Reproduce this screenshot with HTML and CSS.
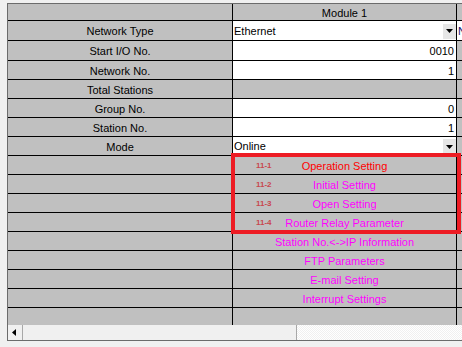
FILE: index.html
```html
<!DOCTYPE html>
<html>
<head>
<meta charset="utf-8">
<link rel="stylesheet" href="styles.css">
</head>
<body>
<div class="sheet">
  <div class="row r-head">
    <div class="cl"></div>
    <div class="cr gray">Module 1</div>
    <div class="cx"></div>
  </div>
  <div class="row r20">
    <div class="cl">Network Type</div>
    <div class="cr combo"><span>Ethernet</span><span class="btn"><svg width="7" height="4" viewBox="0 0 7 4"><path d="M0 0h7L3.5 4z" fill="#000"/></svg></span></div>
    <div class="cx white"><span class="peek">N</span></div>
  </div>
  <div class="row r20">
    <div class="cl">Start I/O No.</div>
    <div class="cr num">0010</div>
    <div class="cx"></div>
  </div>
  <div class="row">
    <div class="cl">Network No.</div>
    <div class="cr num">1</div>
    <div class="cx"></div>
  </div>
  <div class="row">
    <div class="cl">Total Stations</div>
    <div class="cr gray"></div>
    <div class="cx"></div>
  </div>
  <div class="row">
    <div class="cl">Group No.</div>
    <div class="cr num">0</div>
    <div class="cx"></div>
  </div>
  <div class="row">
    <div class="cl">Station No.</div>
    <div class="cr num">1</div>
    <div class="cx"></div>
  </div>
  <div class="row">
    <div class="cl">Mode</div>
    <div class="cr combo"><span>Online</span><span class="btn"><svg width="7" height="4" viewBox="0 0 7 4"><path d="M0 0h7L3.5 4z" fill="#000"/></svg></span></div>
    <div class="cx"></div>
  </div>
  <div class="row">
    <div class="cl"></div>
    <div class="cr gray link red"><span class="tag">11-1</span>Operation Setting</div>
    <div class="cx"></div>
  </div>
  <div class="row">
    <div class="cl"></div>
    <div class="cr gray link"><span class="tag">11-2</span>Initial Setting</div>
    <div class="cx"></div>
  </div>
  <div class="row">
    <div class="cl"></div>
    <div class="cr gray link"><span class="tag">11-3</span>Open Setting</div>
    <div class="cx"></div>
  </div>
  <div class="row">
    <div class="cl"></div>
    <div class="cr gray link"><span class="tag">11-4</span>Router Relay Parameter</div>
    <div class="cx"></div>
  </div>
  <div class="row">
    <div class="cl"></div>
    <div class="cr gray link">Station No.&lt;-&gt;IP Information</div>
    <div class="cx"></div>
  </div>
  <div class="row">
    <div class="cl"></div>
    <div class="cr gray link">FTP Parameters</div>
    <div class="cx"></div>
  </div>
  <div class="row">
    <div class="cl"></div>
    <div class="cr gray link">E-mail Setting</div>
    <div class="cx"></div>
  </div>
  <div class="row">
    <div class="cl"></div>
    <div class="cr gray link">Interrupt Settings</div>
    <div class="cx"></div>
  </div>
  <div class="row r-last">
    <div class="cl"></div>
    <div class="cr gray"></div>
    <div class="cx"></div>
  </div>
  <div class="scroll">
    <div class="arrow"><svg width="4" height="7" viewBox="0 0 4 7"><path d="M4 0v7L0 3.5z" fill="#000"/></svg></div>
    <div class="thumb"></div>
    <div class="track"></div>
  </div>
  <div class="highlight"></div>
</div>
</body>
</html>
```
FILE: styles.css
```css
* { box-sizing: border-box; }
html, body { margin: 0; padding: 0; }
body {
  background: #f0f0f0;
  font-family: "Liberation Sans", Arial, sans-serif;
  font-size: 11px;
  color: #000;
  width: 462px;
  height: 347px;
  overflow: hidden;
}
.sheet {
  position: relative;
  margin: 3px 0 0 7px;
  width: 470px;
  border-top: 1px solid #6b6b6b;
  border-left: 1px solid #6b6b6b;
  border-bottom: 1px solid #6b6b6b;
}
.row {
  display: flex;
  height: 19px;
  border-bottom: 1px solid #000;
}
.row.r-head { height: 17px; }
.row.r20 { height: 20px; }
.row.r-last { height: 17px; border-bottom: none; }
.cl, .cr, .cx {
  display: flex;
  align-items: center;
  white-space: nowrap;
  overflow: hidden;
}
.cl {
  width: 225px;
  border-right: 1px solid #000;
  background: #c0c0c0;
  justify-content: center;
  padding-top: 1px;
}
.cr {
  width: 224px;
  border-right: 1px solid #000;
  position: relative;
}
.cx {
  flex: 1;
  background: #c0c0c0;
}
.cx.white { background: #fff; }
.peek { padding-left: 1px; color: #10106b; }
.gray {
  background: #c0c0c0;
  justify-content: center;
  padding-top: 1px;
}
.num {
  background: #fff;
  justify-content: flex-end;
  padding-right: 2px;
  padding-top: 1px;
}
.combo {
  background: #fff;
  justify-content: space-between;
  padding-left: 1px;
}
.btn {
  width: 13px;
  height: 15px;
  background: #e6e6e6;
  display: flex;
  align-items: center;
  justify-content: center;
  margin-top: 1px;
}
.btn svg { display: block; }
.link { color: #ff00ff; }
.link.red { color: #ff0000; }
.tag {
  position: absolute;
  left: 23px;
  top: 6px;
  font-size: 8px;
  font-weight: bold;
  color: #c8464e;
  line-height: 8px;
}
.scroll {
  display: flex;
  height: 15px;
}
.arrow {
  width: 15px;
  background: #f0f0f0;
  border-right: 1px solid #a8a8a8;
  display: flex;
  align-items: center;
  padding-left: 4px;
}
.arrow svg { display: block; }
.thumb {
  width: 274px;
  background: #f0f0f0;
  border-right: 1px solid #a8a8a8;
}
.track {
  flex: 1;
  background: repeating-conic-gradient(#ffffff 0 25%, #f0f0f0 0 50%) 0 0 / 2px 2px;
}
.highlight {
  position: absolute;
  left: 223px;
  top: 149px;
  width: 230px;
  height: 81px;
  border: 4px solid #ed1c24;
}
```
